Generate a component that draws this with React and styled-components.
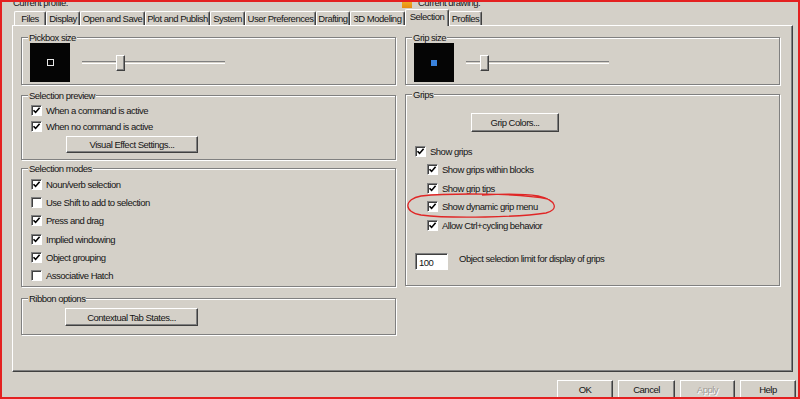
import React from "react";
import styled, { createGlobalStyle } from "styled-components";

const GlobalStyle = createGlobalStyle`
  body {
    margin: 0;
    background: #ffffff;
    font-family: "Liberation Sans", Arial, sans-serif;
  }
`;

const Frame = styled.div`
  position: relative;
  width: 800px;
  height: 399px;
  box-sizing: border-box;
  border: 2px solid #e42020;
  background: #d4d0c8;
  display: flex;
  flex-direction: column;
  overflow: hidden;
  font-size: 9.5px;
  letter-spacing: -0.5px;
  color: #151515;

  & > * {
    flex: none;
  }
`;

const Header = styled.div`
  height: 7px;
  overflow: hidden;
  display: grid;
  grid-template-columns: 389px auto;
  padding-left: 11px;
`;

const HeaderText = styled.div`
  display: flex;
  align-items: flex-start;
  gap: 6px;
  margin-top: -5px;
  line-height: 11px;
`;

const DrawingIcon = styled.span`
  display: inline-block;
  width: 10px;
  height: 11px;
  background: linear-gradient(#f4c430, #e88a10);
`;

const Tabs = styled.div`
  display: flex;
  align-items: flex-end;
  height: 16px;
  padding-left: 12px;
`;

const Tab = styled.div`
  position: relative;
  z-index: ${(p) => (p.$active ? 2 : 1)};
  width: ${(p) => p.$w}px;
  height: ${(p) => (p.$active ? 17 : 14)}px;
  margin-bottom: ${(p) => (p.$active ? -1 : 0)}px;
  box-sizing: border-box;
  border-top: 1px solid #ffffff;
  border-left: 1px solid #ffffff;
  border-right: 1px solid #404040;
  border-radius: 2px 2px 0 0;
  box-shadow: inset -1px 0 0 #808080;
  background: #d4d0c8;
  display: flex;
  align-items: center;
  justify-content: center;
  padding-bottom: ${(p) => (p.$active ? 3 : 0)}px;
  white-space: nowrap;
`;

const Panel = styled.div`
  height: 347px;
  margin: 0 5px 0 10px;
  box-sizing: border-box;
  border: 1px solid;
  border-color: #ffffff #404040 #404040 #ffffff;
  box-shadow: inset -1px -1px 0 #808080;
  padding: 6px 11px 0 8px;
  display: flex;
  gap: 9px;
`;

const Column = styled.div`
  width: 375px;
  display: flex;
  flex-direction: column;
`;

const Group = styled.fieldset`
  margin: ${(p) => p.$mt || 0}px 0 0;
  padding: ${(p) => p.$pt || 0}px 8px 0 9px;
  height: ${(p) => p.$h}px;
  box-sizing: border-box;
  min-width: 0;
  border: 1px solid #808080;
  box-shadow: inset 1px 1px 0 #ffffff, 1px 1px 0 #ffffff;
`;

const Legend = styled.legend`
  margin-left: -3px;
  padding: 0 1px;
  line-height: 11px;
  background: #d4d0c8;
`;

const SizeRow = styled.div`
  display: flex;
  align-items: center;
  gap: 12px;
  margin-left: -1px;
`;

const Preview = styled.div`
  width: 40px;
  height: 39px;
  background: #050505;
  display: flex;
  align-items: center;
  justify-content: center;
`;

const PickMarker = styled.span`
  width: 5px;
  height: 5px;
  border: 1px solid #e8e8e8;
`;

const GripMarker = styled.span`
  width: 6px;
  height: 6px;
  background: #3a82dc;
`;

const Slider = styled.div`
  position: relative;
  width: 143px;
  height: 16px;
  display: flex;
  align-items: center;
`;

const Groove = styled.div`
  width: 100%;
  height: 1px;
  border-top: 1px solid #808080;
  border-bottom: 1px solid #ffffff;
`;

const Thumb = styled.div`
  position: absolute;
  top: 0;
  width: 9px;
  height: 16px;
  box-sizing: border-box;
  border: 1px solid;
  border-color: #ffffff #404040 #404040 #ffffff;
  box-shadow: inset -1px -1px 0 #808080;
  background: #d4d0c8;
`;

const CheckRow = styled.div`
  display: flex;
  align-items: center;
  gap: 4px;
  height: ${(p) => p.$h || 18.3}px;
  padding-left: ${(p) => p.$indent || 0}px;
  white-space: nowrap;
`;

const Box = styled.span`
  width: 11px;
  height: 11px;
  box-sizing: border-box;
  flex: none;
  background: #ffffff;
  border: 1px solid;
  border-color: #808080 #ffffff #ffffff #808080;
  box-shadow: inset 1px 1px 0 #404040;
  display: flex;
  align-items: center;
  justify-content: center;
`;

const Button = styled.div`
  width: ${(p) => p.$w}px;
  height: ${(p) => p.$h || 18}px;
  margin: ${(p) => p.$m || "0"};
  box-sizing: border-box;
  border: 1px solid;
  border-color: #ffffff #404040 #404040 #ffffff;
  box-shadow: inset -1px -1px 0 #808080;
  background: #d4d0c8;
  display: flex;
  align-items: center;
  justify-content: center;
  flex: none;
  color: ${(p) => (p.$disabled ? "#a09c96" : "inherit")};
  text-shadow: ${(p) => (p.$disabled ? "1px 1px 0 #ffffff" : "none")};
`;

const LimitRow = styled.div`
  display: flex;
  align-items: flex-start;
  gap: 11px;
  margin-top: 19px;
`;

const TextInput = styled.div`
  width: 33px;
  height: 17px;
  box-sizing: border-box;
  background: #ffffff;
  border: 1px solid;
  border-color: #808080 #ffffff #ffffff #808080;
  box-shadow: inset 1px 1px 0 #404040;
  padding: 3px 0 0 3px;
  line-height: 11px;
`;

const LimitLabel = styled.span`
  line-height: 11px;
`;

const Footer = styled.div`
  display: flex;
  justify-content: flex-end;
  gap: 5px;
  margin-top: 8px;
  padding-right: 2px;
`;

const Annotation = styled.svg`
  position: absolute;
  left: -2px;
  top: -2px;
  pointer-events: none;
`;

const tabs = [
  ["Files", 32],
  ["Display", 34],
  ["Open and Save", 65],
  ["Plot and Publish", 65],
  ["System", 35],
  ["User Preferences", 71],
  ["Drafting", 34],
  ["3D Modeling", 55],
  ["Selection", 44],
  ["Profiles", 33],
];

const Check = ({ checked, label, indent, h }) => (
  <CheckRow $indent={indent} $h={h}>
    <Box>
      {checked && (
        <svg width="9" height="9" viewBox="0 0 9 9">
          <path d="M1.5 4.2 L3.6 6.4 L7.6 1.8" fill="none" stroke="#000" strokeWidth="1.6" />
        </svg>
      )}
    </Box>
    <span>{label}</span>
  </CheckRow>
);

const SizeSlider = ({ value }) => (
  <Slider>
    <Groove />
    <Thumb style={{ left: value }} />
  </Slider>
);

export default function App() {
  return (
    <>
      <GlobalStyle />
      <Frame>
        <Header>
          <HeaderText>Current profile:</HeaderText>
          <HeaderText>
            <DrawingIcon />
            <span>Current drawing:</span>
          </HeaderText>
        </Header>

        <Tabs>
          {tabs.map(([name, w]) => (
            <Tab key={name} $w={w} $active={name === "Selection"}>
              {name}
            </Tab>
          ))}
        </Tabs>

        <Panel>
          <Column>
            <Group $h={53}>
              <Legend>Pickbox size</Legend>
              <SizeRow>
                <Preview>
                  <PickMarker />
                </Preview>
                <SizeSlider value={34} />
              </SizeRow>
            </Group>

            <Group $h={70} $mt={5} $pt={1}>
              <Legend>Selection preview</Legend>
              <Check checked h={16} label="When a command is active" />
              <Check checked h={16} label="When no command is active" />
              <Button $w={132} $h={17} $m="2px 0 0 35px">
                Visual Effect Settings...
              </Button>
            </Group>

            <Group $h={124} $mt={3} $pt={1}>
              <Legend>Selection modes</Legend>
              <Check checked label="Noun/verb selection" />
              <Check label="Use Shift to add to selection" />
              <Check checked label="Press and drag" />
              <Check checked label="Implied windowing" />
              <Check checked label="Object grouping" />
              <Check label="Associative Hatch" />
            </Group>

            <Group $h={42} $mt={6} $pt={4}>
              <Legend>Ribbon options</Legend>
              <Button $w={133} $m="0 0 0 34px">
                Contextual Tab States...
              </Button>
            </Group>
          </Column>

          <Column>
            <Group $h={53}>
              <Legend>Grip size</Legend>
              <SizeRow>
                <Preview>
                  <GripMarker />
                </Preview>
                <SizeSlider value={14} />
              </SizeRow>
            </Group>

            <Group $h={197} $mt={4} $pt={13}>
              <Legend>Grips</Legend>
              <Button $w={88} $h={19} $m="0 0 10px 56px">
                Grip Colors...
              </Button>
              <Check checked label="Show grips" />
              <Check checked indent={12} h={18.5} label="Show grips within blocks" />
              <Check checked indent={12} h={18.5} label="Show grip tips" />
              <Check checked indent={12} h={18.5} label="Show dynamic grip menu" />
              <Check checked indent={12} h={18.5} label="Allow Ctrl+cycling behavior" />
              <LimitRow>
                <TextInput>100</TextInput>
                <LimitLabel>Object selection limit for display of grips</LimitLabel>
              </LimitRow>
            </Group>
          </Column>
        </Panel>

        <Footer>
          <Button $w={56} $h={19}>OK</Button>
          <Button $w={57} $h={19}>Cancel</Button>
          <Button $w={55} $h={19} $disabled>Apply</Button>
          <Button $w={56} $h={19}>Help</Button>
        </Footer>

        <Annotation width="800" height="399" viewBox="0 0 800 399">
          <path
            d="M548 199 C520 193, 450 193, 421 196 C404 199, 403 212, 421 215 C452 219, 520 217, 546 213 C559 210, 557 200, 538 196 C520 193, 500 194, 482 195"
            fill="none"
            stroke="#e02626"
            strokeWidth="1.3"
          />
        </Annotation>
      </Frame>
    </>
  );
}
